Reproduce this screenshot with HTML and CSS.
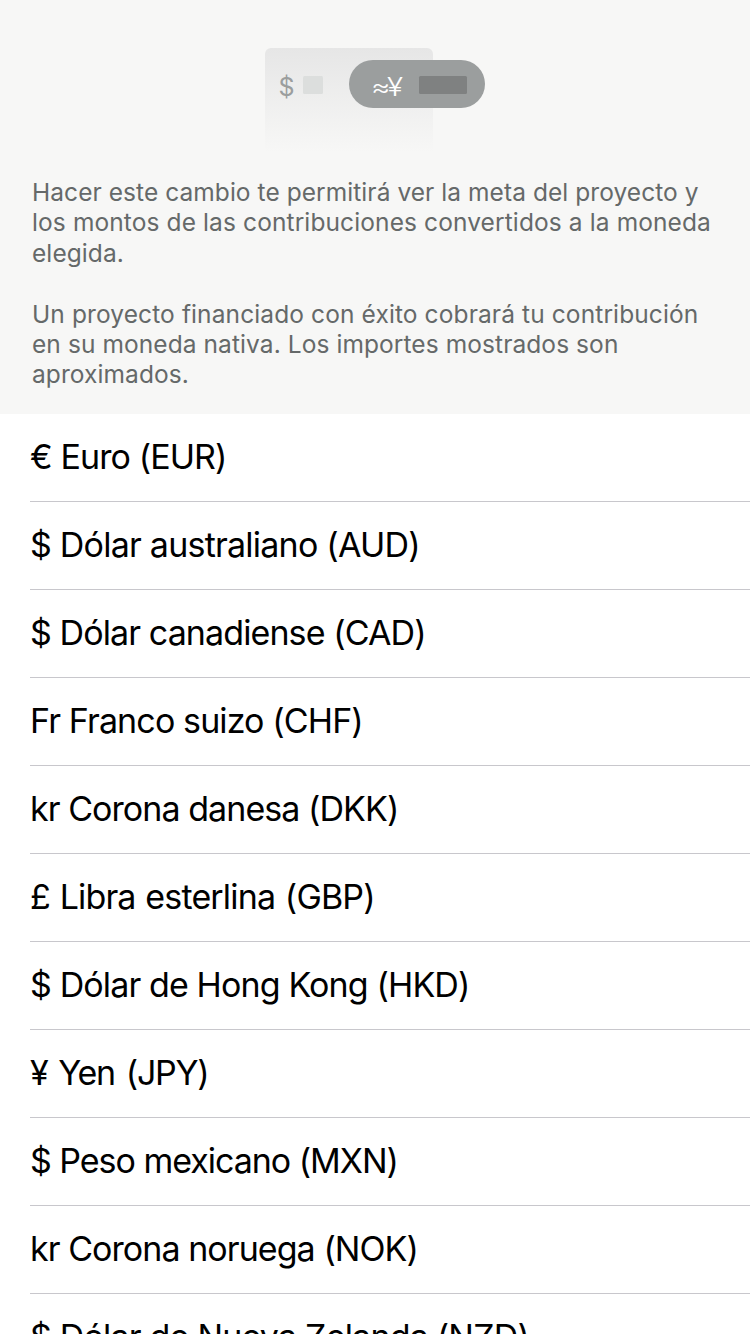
FILE: index.html
```html
<!DOCTYPE html>
<html lang="es">
<head>
<meta charset="utf-8">
<title>Moneda</title>
<link rel="stylesheet" href="styles.css">
</head>
<body>
<header class="intro">
  <div class="illustration">
    <div class="card"><span class="dollar">$</span><span class="amount"></span></div>
    <div class="pill"><span class="approx"><span class="wave">≈</span><span class="yen">¥</span></span><span class="pill-amount"></span></div>
  </div>
  <p class="note"><span class="l1">Hacer este cambio te permitirá ver la meta del proyecto y</span><br><span class="l2">los montos de las contribuciones convertidos a la moneda</span><br><span class="l3">elegida.</span></p>
  <p class="note"><span class="l4">Un proyecto financiado con éxito cobrará tu contribución</span><br><span class="l5">en su moneda nativa. Los importes mostrados son</span><br><span class="l6">aproximados.</span></p>
</header>
<ul class="list">
  <li class="row"><span class="r1">€ Euro (EUR)</span></li>
  <li class="row"><span class="r2">$ Dólar australiano (AUD)</span></li>
  <li class="row"><span class="r3">$ Dólar canadiense (CAD)</span></li>
  <li class="row"><span class="r4">Fr Franco suizo (CHF)</span></li>
  <li class="row"><span class="r5">kr Corona danesa (DKK)</span></li>
  <li class="row"><span class="r6">£ Libra esterlina (GBP)</span></li>
  <li class="row"><span class="r7">$ Dólar de Hong Kong (HKD)</span></li>
  <li class="row"><span class="r8">¥ Yen (JPY)</span></li>
  <li class="row"><span class="r9">$ Peso mexicano (MXN)</span></li>
  <li class="row"><span class="r10">kr Corona noruega (NOK)</span></li>
  <li class="row"><span class="r11">$ Dólar de Nueva Zelanda (NZD)</span></li>
</ul>
</body>
</html>
```
FILE: styles.css
```css
* { box-sizing: border-box; }
body {
  margin: 0;
  height: 1334px;
  overflow: hidden;
  display: flex;
  flex-direction: column;
  background: #fff;
  color: #000;
  font-family: Inter, "Liberation Sans", sans-serif;
}
.intro {
  flex: none;
  height: 414px;
  padding: 48px 32px 0;
  background: #f7f7f6;
}
.illustration {
  position: relative;
  width: 220px;
  height: 104px;
  margin: 0 auto 25px;
}
.card {
  display: flex;
  align-items: flex-start;
  gap: 9px;
  width: 168px;
  height: 104px;
  padding: 20px 14px;
  border-radius: 6px 6px 0 0;
  background: linear-gradient(#e6e6e6, #f7f7f6);
}
.dollar { width: 15px; margin-left: -0.5px; font-size: 25px; line-height: 38px; color: #9b9e9e; }
.amount { width: 20px; height: 18px; margin-top: 8px; border-radius: 1.5px; background: #dcdedd; }
.pill {
  position: absolute;
  left: 84px;
  top: 12px;
  display: flex;
  align-items: center;
  justify-content: space-between;
  width: 136px;
  height: 48px;
  padding: 2px 18px 0 22px;
  border-radius: 24px;
  background: #9b9e9e;
}
.approx { display: flex; padding-top: 3px; font-size: 26px; line-height: 32px; font-weight: 350; color: #fff; }
.wave { width: 16px; transform: scaleX(1.15); transform-origin: left; }
.yen { transform: scaleX(1.14); transform-origin: left; margin-left: -0.5px; }
.pill-amount { width: 48px; height: 18px; border-radius: 1.5px; background: #7f8181; }
.note {
  margin: 0 0 31px;
  font-size: 24.5px;
  line-height: 30.3px;
  letter-spacing: 0.08px;
  white-space: nowrap;
  color: #656969;
}
.l1 { letter-spacing: 0.06px; }
.l2 { letter-spacing: 0.11px; }
.l4 { letter-spacing: 0.11px; }
.list { flex: none; margin: 0; padding: 0 0 0 30px; list-style: none; }
.row {
  height: 88px;
  border-bottom: 1px solid #c8c7cc;
  font-size: 34px;
  line-height: 85px;
  letter-spacing: -0.8px;
  white-space: nowrap;
}
.r1 { letter-spacing: -0.9px; }
.r2 { letter-spacing: -0.77px; }
.r3 { letter-spacing: -0.9px; }
.r4 { letter-spacing: -0.88px; }
.r5 { letter-spacing: -0.94px; }
.r6 { letter-spacing: -0.84px; word-spacing: 1px; }
.r7 { letter-spacing: -0.87px; }
.r8 { letter-spacing: -1.3px; word-spacing: 2.7px; }
.r9 { letter-spacing: -1.03px; }
.r10 { letter-spacing: -0.94px; }
```
